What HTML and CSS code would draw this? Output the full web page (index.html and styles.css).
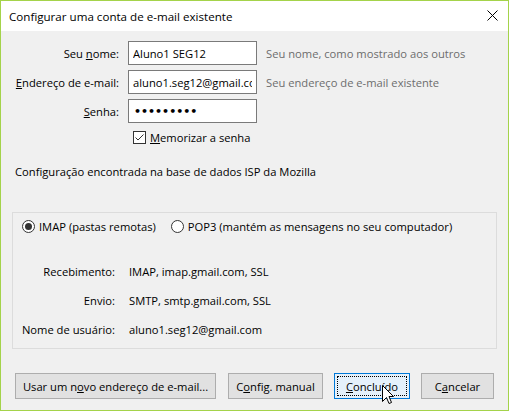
FILE: index.html
```html
<!DOCTYPE html>
<html lang="pt-BR">
<head>
<meta charset="utf-8">
<title>Configurar uma conta de e-mail existente</title>
<link rel="stylesheet" href="styles.css">
</head>
<body>
<div class="window">
  <div class="titlebar">
    <span class="title">Configurar uma conta de e-mail existente</span>
    <svg class="close" width="11" height="11" viewBox="0 0 11 11"><path d="M0.5 0.5 L10.5 10.5 M10.5 0.5 L0.5 10.5" stroke="#000" stroke-width="1" fill="none"/></svg>
  </div>
  <div class="content">
    <div class="form">
      <label class="lbl">Seu <u>n</u>ome:</label>
      <input class="field" type="text" value="Aluno1 SEG12">
      <span class="hint">Seu nome, como mostrado aos outros</span>

      <label class="lbl"><u>E</u>ndereço de e-mail:</label>
      <input class="field" type="text" value="aluno1.seg12@gmail.com">
      <span class="hint">Seu endereço de e-mail existente</span>

      <label class="lbl"><u>S</u>enha:</label>
      <input class="field pass" type="password" value="123456789">
      <span></span>

      <span></span>
      <label class="check">
        <svg width="13" height="13" viewBox="0 0 13 13"><rect x="0.5" y="0.5" width="12" height="12" fill="#fff" stroke="#333"/><path d="M2.5 6.5 L5 9 L10.5 3.5" stroke="#333" stroke-width="1" fill="none"/></svg>
        <span><u>M</u>emorizar a senha</span>
      </label>
      <span></span>
    </div>

    <p class="found">Configuração encontrada na base de dados ISP da Mozilla</p>

    <div class="group">
      <div class="radios">
        <label class="radio">
          <svg width="13" height="13" viewBox="0 0 13 13"><circle cx="6.5" cy="6.5" r="6" fill="#fff" stroke="#333"/><circle cx="6.5" cy="6.5" r="3.5" fill="#333"/></svg>
          <span>IMAP (pastas remotas)</span>
        </label>
        <label class="radio">
          <svg width="13" height="13" viewBox="0 0 13 13"><circle cx="6.5" cy="6.5" r="6" fill="#fff" stroke="#333"/></svg>
          <span>POP3 (mantém as mensagens no seu computador)</span>
        </label>
      </div>
      <div class="details">
        <span class="dlbl">Recebimento:</span><span class="dval">IMAP, imap.gmail.com, SSL</span>
        <span class="dlbl">Envio:</span><span class="dval">SMTP, smtp.gmail.com, SSL</span>
        <span class="dlbl">Nome de usuário:</span><span class="dval">aluno1.seg12@gmail.com</span>
      </div>
    </div>

    <div class="buttons">
      <button class="btn btn-new">Usar um n<u>o</u>vo endereço de e-mail...</button>
      <button class="btn btn-manual">C<u>o</u>nfig. manual</button>
      <button class="btn btn-done"><span class="focus"><u>C</u>oncluído</span></button>
      <button class="btn btn-cancel">C<u>a</u>ncelar</button>
    </div>
  </div>
  <svg class="cursor" width="12" height="20" viewBox="0 0 12 20"><path d="M0.5 0.5 L0.5 16.5 L4.5 12.5 L7 18.5 L9.5 17.5 L7 11.5 L11.5 11.5 Z" fill="#fff" stroke="#000" stroke-width="1" stroke-linejoin="miter"/></svg>
</div>
</body>
</html>
```

FILE: styles.css
```css
* { box-sizing: border-box; }

html, body {
  margin: 0;
  padding: 0;
}

body {
  font-family: "Open Sans", "Noto Sans", sans-serif;
  font-size: 11.2px;
  color: #000;
  background: #f0f0f0;
}

.window {
  position: relative;
  width: 509px;
  height: 411px;
  border: 1px solid #a4d34a;
  background: #f0f0f0;
  display: flex;
  flex-direction: column;
  overflow: hidden;
}

.titlebar {
  height: 30px;
  flex: none;
  background: #fff;
  display: flex;
  align-items: center;
  justify-content: space-between;
  padding: 0 10px 0 8px;
}

.title {
  font-size: 11.6px;
  color: #000;
  margin-top: 1px;
}

.close {
  display: block;
  margin-top: -1px;
}

.content {
  flex: 1;
  display: flex;
  flex-direction: column;
}

.form {
  margin-top: 10px;
  display: grid;
  grid-template-columns: 118px 129px auto;
  grid-template-rows: 24px 24px 24px 19px;
  column-gap: 9px;
  row-gap: 5px;
  align-items: center;
}

.lbl {
  text-align: right;
}

.field {
  height: 24px;
  width: 129px;
  border: 1px solid #7a7a7a;
  background: #fff;
  padding: 0 4px;
  font-family: inherit;
  font-size: 11.2px;
  color: #000;
  outline: none;
  margin: 0;
}

.pass {
  font-family: "DejaVu Sans", sans-serif;
  font-weight: bold;
  font-size: 11px;
  letter-spacing: 0;
  padding-left: 5px;
}

.hint {
  color: #6d6d6d;
}

.check {
  display: flex;
  align-items: center;
  gap: 4px;
  padding-left: 5px;
}

.check svg, .radio svg {
  display: block;
  flex: none;
}

.found {
  margin: 17px 0 0 14px;
  line-height: 16px;
}

.group {
  margin: 32px 11px 0 11px;
  border: 1px solid #dcdcdc;
  padding: 6px 0 4px 0;
}

.radios {
  display: flex;
  align-items: center;
  padding-left: 9px;
  height: 15px;
  gap: 15px;
}

.radio {
  display: flex;
  align-items: center;
  gap: 4px;
}

.details {
  margin-top: 23px;
  display: grid;
  grid-template-columns: 102px auto;
  grid-auto-rows: 29px;
  column-gap: 14px;
  align-items: center;
}

.dlbl {
  text-align: right;
}

.buttons {
  margin-top: 24px;
  padding-left: 14px;
  display: flex;
  gap: 12px;
}

.btn {
  height: 26px;
  border: 1px solid #adadad;
  background: #e1e1e1;
  font-family: inherit;
  font-size: 11.2px;
  color: #000;
  padding: 0;
  margin: 0;
}

.btn-new { width: 201px; }
.btn-manual { width: 95px; }
.btn-done {
  width: 76px;
  border-color: #0078d7;
  background: #e5f1fb;
  padding: 2px;
}
.btn-cancel { width: 73px; }

.btn-manual + .btn-done,
.btn-done + .btn-cancel {
  margin-left: -1px;
}

.focus {
  display: flex;
  align-items: center;
  justify-content: center;
  height: 100%;
  border: 1px dotted #000;
}

.cursor {
  position: absolute;
  left: 381px;
  top: 384px;
}
```
